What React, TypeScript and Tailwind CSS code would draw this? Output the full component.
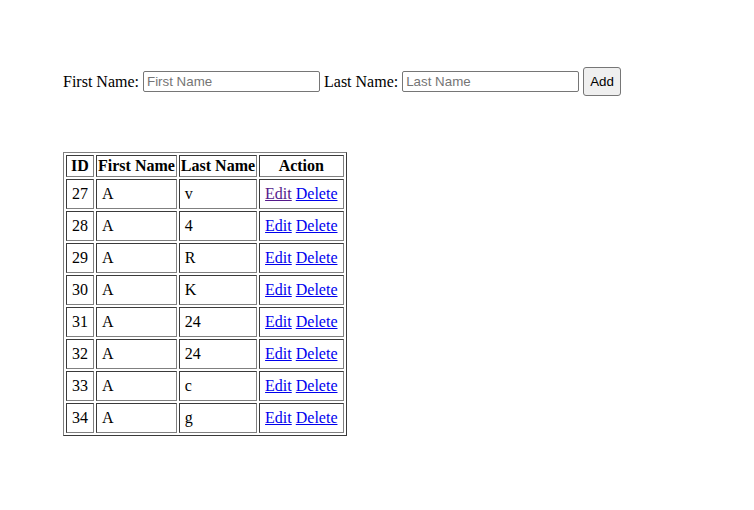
const rows = [
  { id: 27, first: 'A', last: 'v' },
  { id: 28, first: 'A', last: '4' },
  { id: 29, first: 'A', last: 'R' },
  { id: 30, first: 'A', last: 'K' },
  { id: 31, first: 'A', last: '24' },
  { id: 32, first: 'A', last: '24' },
  { id: 33, first: 'A', last: 'c' },
  { id: 34, first: 'A', last: 'g' },
];

const th =
  'border border-t-[#3a3a3a] border-l-[#3a3a3a] border-r-[#808080] border-b-[#808080] px-[1px] py-[1px] font-bold text-center';
const td =
  'border border-t-[#3a3a3a] border-l-[#3a3a3a] border-r-[#808080] border-b-[#808080] p-[5px] text-left';

const App = () => {
  return (
    <div className="min-h-screen bg-white pt-[67px] pl-[63px] text-black font-['Liberation_Serif','Times_New_Roman',serif] text-[16px] leading-[18px]">
      <div className="flex items-center gap-[4px]">
        <span>First Name:</span>
        <input
          placeholder="First Name"
          className="w-[177px] h-[21px] border border-[#767676] rounded-[2px] px-[3px] text-[13.333px] font-['Liberation_Sans',Arial,sans-serif] placeholder:text-[#757575] outline-none"
        />
        <span>Last Name:</span>
        <input
          placeholder="Last Name"
          className="w-[177px] h-[21px] border border-[#767676] rounded-[2px] px-[3px] text-[13.333px] font-['Liberation_Sans',Arial,sans-serif] placeholder:text-[#757575] outline-none"
        />
        <button className="h-[29px] px-[6px] bg-[#efefef] border border-[#767676] rounded-[3px] text-[13.333px] font-['Liberation_Sans',Arial,sans-serif] text-black">
          Add
        </button>
      </div>

      <table className="mt-[56px] border-separate border-spacing-[2px] border border-t-[#808080] border-l-[#808080] border-r-[#3a3a3a] border-b-[#3a3a3a]">
        <thead>
          <tr>
            <th className={th}>ID</th>
            <th className={th}>First Name</th>
            <th className={th}>Last Name</th>
            <th className={th}>Action</th>
          </tr>
        </thead>
        <tbody>
          {rows.map((r, i) => (
            <tr key={r.id}>
              <td className={td}>{r.id}</td>
              <td className={td}>{r.first}</td>
              <td className={td}>{r.last}</td>
              <td className={td}>
                <a href="#" className={i === 0 ? 'underline text-[#551a8b]' : 'underline text-[#0000ee]'}>
                  Edit
                </a>{' '}
                <a href="#" className="underline text-[#0000ee]">
                  Delete
                </a>
              </td>
            </tr>
          ))}
        </tbody>
      </table>
    </div>
  );
};

export default App;
